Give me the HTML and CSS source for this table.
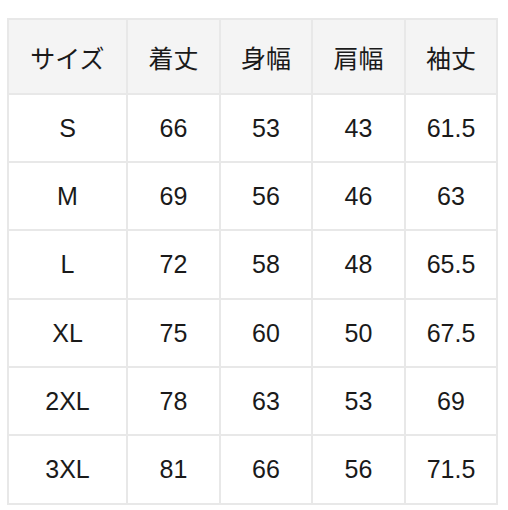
FILE: index.html
```html
<!DOCTYPE html>
<html lang="ja">
<head>
<meta charset="utf-8">
<link rel="stylesheet" href="styles.css">
</head>
<body>
<table class="size-table">
  <colgroup>
    <col class="c1"><col class="c2"><col class="c3"><col class="c4"><col class="c5">
  </colgroup>
  <thead>
    <tr><th>サイズ</th><th>着丈</th><th>身幅</th><th>肩幅</th><th>袖丈</th></tr>
  </thead>
  <tbody>
    <tr><td>S</td><td>66</td><td>53</td><td>43</td><td>61.5</td></tr>
    <tr><td>M</td><td>69</td><td>56</td><td>46</td><td>63</td></tr>
    <tr><td>L</td><td>72</td><td>58</td><td>48</td><td>65.5</td></tr>
    <tr><td>XL</td><td>75</td><td>60</td><td>50</td><td>67.5</td></tr>
    <tr><td>2XL</td><td>78</td><td>63</td><td>53</td><td>69</td></tr>
    <tr><td>3XL</td><td>81</td><td>66</td><td>56</td><td>71.5</td></tr>
  </tbody>
</table>
</body>
</html>
```
FILE: styles.css
```css
html, body {
  margin: 0;
  background: #ffffff;
}
body {
  padding: 18px 0 0 7px;
  font-family: "Liberation Sans", "Noto Sans CJK JP", sans-serif;
  color: #1a1a1a;
}
.size-table {
  border-collapse: collapse;
  table-layout: fixed;
  width: 491px;
  font-size: 25px;
}
.c1 { width: 119px; }
.c2 { width: 93px; }
.c3 { width: 92px; }
.c4 { width: 93px; }
.c5 { width: 92px; }
.size-table th,
.size-table td {
  border: 2px solid #e8e8e8;
  text-align: center;
  vertical-align: middle;
  padding: 0;
  font-weight: normal;
}
.size-table th {
  background: #f4f4f4;
  height: 73px;
  font-size: 25px;
  font-family: "Noto Sans CJK JP", sans-serif;
}
.size-table td {
  height: 66px;
}
.size-table tbody tr:nth-child(3n) td {
  height: 67px;
}
```
